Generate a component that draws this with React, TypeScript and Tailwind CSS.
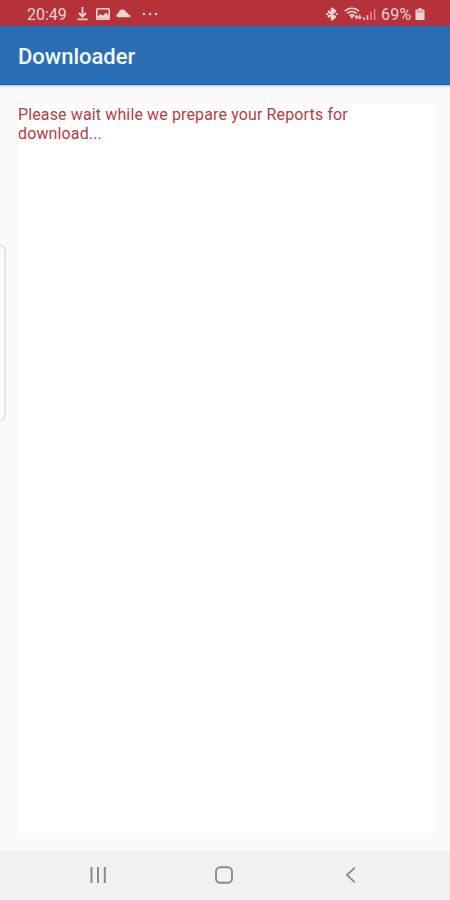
import type { ReactNode } from "react";

interface IconProps {
  className: string;
  viewBox: string;
  children: ReactNode;
}

function Icon({ className, viewBox, children }: IconProps) {
  return (
    <svg className={`block shrink-0 ${className}`} viewBox={viewBox} fill="none" aria-hidden="true">
      {children}
    </svg>
  );
}

function StatusBar() {
  return (
    <div className="flex h-[26px] items-center bg-[#b5323b] pt-px pl-[27px] pr-[25px] text-[16px] leading-[24px] text-[#f3d3d2]">
      <span className="w-[50px] pt-[2px]">20:49</span>
      <Icon className="h-[14px] w-[11px]" viewBox="0 0 11 14">
        <path d="M5.5 0v9M2 6l3.5 3.6L9 6M0.3 12.3h10.4" stroke="currentColor" strokeWidth="1.8" />
      </Icon>
      <Icon className="ml-[8px] h-[12px] w-[14px]" viewBox="0 0 14 12">
        <rect x="0.8" y="0.8" width="12.4" height="10.4" rx="0.8" stroke="currentColor" strokeWidth="1.6" />
        <path d="M1.5 8.5l3-2.4 2.6 1.7 2.6-3.2 3 2.6v3.3H1.5z" fill="currentColor" />
      </Icon>
      <Icon className="ml-[6px] h-[9px] w-[15px]" viewBox="0 0 15 9">
        <path
          d="M2.2 8.2C-0.2 8-0.2 5 2.2 4.6 2.7 2 4.2 0.5 6.4 0.5c2 0 3.3 1.3 3.8 2.9 1.4.2 2 1 2.3 2 2.6.4 2.8 2.6.6 2.8z"
          fill="currentColor"
        />
      </Icon>
      <Icon className="ml-[11px] h-[4px] w-[16px]" viewBox="0 0 16 4">
        <circle cx="2" cy="2" r="1.3" fill="currentColor" />
        <circle cx="8" cy="2" r="1.3" fill="currentColor" />
        <circle cx="14" cy="2" r="1.3" fill="currentColor" />
      </Icon>

      <Icon className="ml-auto h-[14px] w-[12px]" viewBox="0 0 12 14">
        <path
          d="M2 4l7 5.8L6 12.4V1.6l3 2.6-7 5.8"
          stroke="currentColor"
          strokeWidth="2.4"
          strokeLinejoin="round"
        />
        <path d="M0.3 7h2M9.7 7h2" stroke="currentColor" strokeWidth="1.9" />
      </Icon>
      <Icon className="ml-[6px] h-[14px] w-[19px]" viewBox="0 0 19 14">
        <path
          d="M0.8 4.2c4-4 10.2-4 14.2 0M3.2 6.5c2.7-2.7 6.7-2.7 9.4 0M5.5 8.7c1.4-1.4 3.4-1.4 4.8 0"
          stroke="currentColor"
          strokeWidth="1.6"
        />
        <path d="M5.4 8.6h5L7.9 11.8z" fill="currentColor" />
        <path
          d="M12.5 12.6V8.6M10.8 10.4l1.7-1.8 1.7 1.8M15.8 7.6v4M14.1 10l1.7 1.7 1.7-1.7"
          stroke="currentColor"
          strokeWidth="1.2"
        />
      </Icon>
      <Icon className="h-[12px] w-[13px]" viewBox="0 0 13 12">
        <path d="M1 9.5V12M4.5 7v5" stroke="currentColor" strokeWidth="1.6" />
        <path d="M8 3.5V12M11.6 1v11" stroke="currentColor" strokeWidth="1.4" opacity="0.6" />
      </Icon>
      <span className="ml-[5px] w-[31px] pt-[2px] tracking-[0.2px]">69%</span>
      <Icon className="ml-[3px] h-[12px] w-[10px]" viewBox="0 0 9 12" >
        <path d="M3 0h3v1.5h2.2q.8 0 .8.8v8.9q0 .8-.8.8H.8q-.8 0-.8-.8V2.3q0-.8.8-.8H3z" fill="currentColor" />
        <path d="M1 2.5h7v2H1z" fill="#b5323b" opacity="0.35" />
      </Icon>
    </div>
  );
}

function NavBar() {
  return (
    <nav className="flex h-[50px] items-center bg-[#f1f1f1] text-[#8a8a8a]">
      <button type="button" aria-label="Recent apps" className="ml-[89px]">
        <Icon className="h-[18px] w-[18px]" viewBox="0 0 18 18">
          <path d="M2.5 1v16M9 1v16M15.8 1v16" stroke="currentColor" strokeWidth="2" />
        </Icon>
      </button>
      <button type="button" aria-label="Home" className="ml-[107px]">
        <Icon className="h-[20px] w-[20px]" viewBox="0 0 20 20">
          <rect x="2" y="2.2" width="16" height="15.6" rx="4.4" stroke="currentColor" strokeWidth="1.9" />
        </Icon>
      </button>
      <button type="button" aria-label="Back" className="ml-[110px]">
        <Icon className="h-[18px] w-[14px]" viewBox="0 0 14 18">
          <path d="M10.8 1.6L2.9 9l7.9 7.4" stroke="currentColor" strokeWidth="1.8" />
        </Icon>
      </button>
    </nav>
  );
}

export default function App() {
  return (
    <div className="relative flex h-[900px] w-[450px] flex-col overflow-hidden bg-[#fafafa] font-[Roboto,sans-serif]">
      <StatusBar />
      <header className="flex h-[59px] items-center border-b border-[#1d60a8] bg-[#2a6fb6] px-[18px] shadow-[0_1px_2px_rgba(42,111,182,0.45)]">
        <h1 className="pt-[2px] text-[22px] font-medium text-[#f5f9fd]">Downloader</h1>
      </header>
      <main className="flex flex-1 flex-col pt-[19px] pr-[17px] pb-[17px] pl-[18px]">
        <div className="flex-1 bg-white">
          <p className="pt-[1px] text-[16px] leading-[19px] tracking-[0.13px] text-[#b93c44]">
            Please wait while we prepare your Reports for
            <br />
            download...
          </p>
        </div>
      </main>
      <NavBar />
      {/* edge panel handle, hangs over the left screen edge */}
      <div className="absolute top-[244px] left-[-12px] h-[178px] w-[18px] rounded-[7px] border-2 border-[#e6e6e6] bg-[#fcfcfc]" />
    </div>
  );
}
